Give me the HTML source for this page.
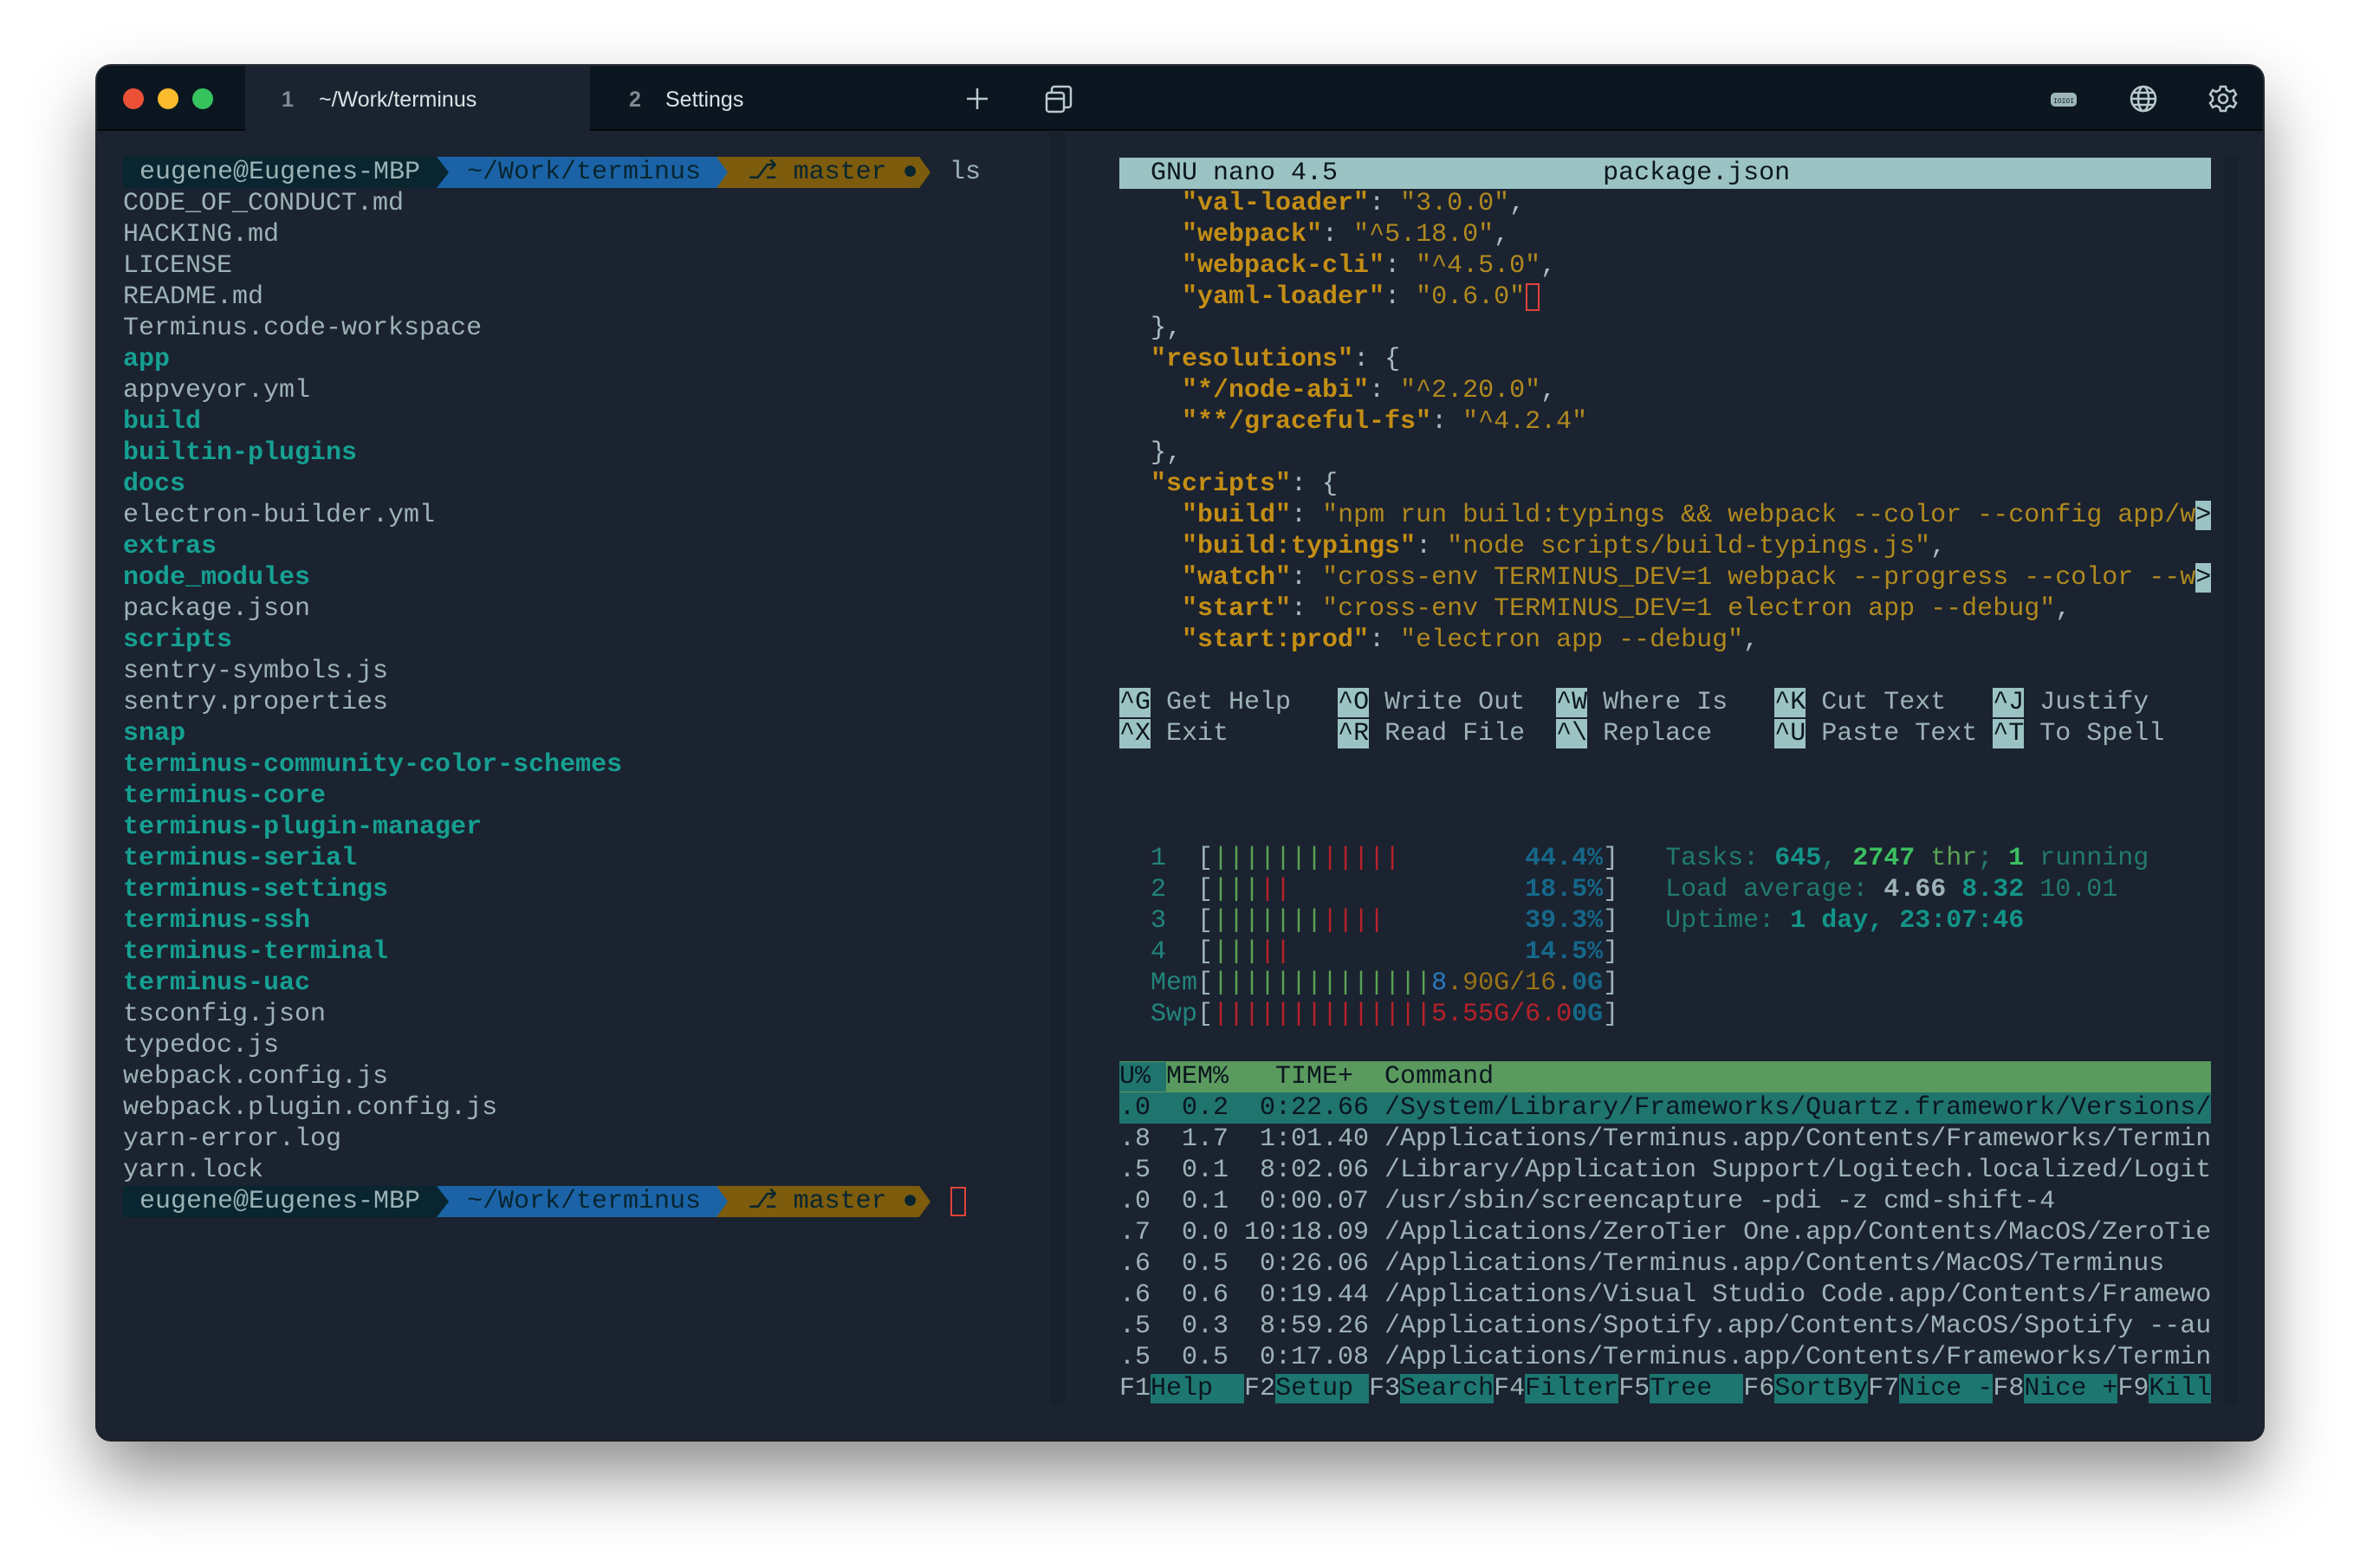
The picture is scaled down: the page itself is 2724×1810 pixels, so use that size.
<!DOCTYPE html>
<html><head><meta charset="utf-8"><style>
*{margin:0;padding:0;box-sizing:border-box}
html,body{width:2724px;height:1810px;overflow:hidden;background:#fff}
body{position:relative;font-family:"Liberation Mono",monospace;}
.win{position:absolute;left:112px;top:76px;width:2500px;height:1586px;background:#1b2330;border-radius:16px;overflow:hidden;box-shadow:0 40px 80px rgba(0,0,0,.45),0 0 0 2px #2a2f36}
.tb{position:absolute;left:0;top:0;width:2500px;height:75px;background:#0c1621;border-bottom:2px solid #06090d}
.tl{position:absolute;top:26px;width:24px;height:24px;border-radius:50%}
.tab1{position:absolute;left:171px;top:0;width:398px;height:76px;background:#1b2330}
.tabt{position:absolute;top:25px;font-family:"Liberation Sans",sans-serif;font-size:25px;color:#d8e4e6}
.r{position:absolute;height:36px;line-height:36px;font-size:30px;white-space:pre;color:#9db2b6}
.L{left:142px}.R{left:1292px;width:1260px;overflow:hidden}
.d{color:#16a092;font-weight:bold}
.k{color:#c48e15;font-weight:bold}.s{color:#b0891f}.p{color:#a9bcc0}
.inv{background:#9cc3c3;color:#0b1620}
.g{color:#5aa255}.rd{color:#b8222a}.pc{color:#16688a;font-weight:bold}.br{color:#9db2b6}.nm{color:#22857c}
.lab{color:#217a70}.bt{color:#139488;font-weight:bold}.bg{color:#3cc060;font-weight:bold}
.fk{color:#9db2b6}.fl{background:#1d7770;color:#0b1620}
.seg{position:absolute;top:0;height:36px}
</style></head><body>
<div class="win">
 <div class="tb">
  <div class="tl" style="left:30px;background:#ec5138"></div>
  <div class="tl" style="left:70px;background:#fbbb2c"></div>
  <div class="tl" style="left:110px;background:#36c25d"></div>
  <div class="tab1"></div>
  <div class="tabt" style="left:213px;color:#7d8d90;font-weight:bold">1</div>
  <div class="tabt" style="left:256px">~/Work/terminus</div>
  <div class="tabt" style="left:614px;color:#7d8d90;font-weight:bold">2</div>
  <div class="tabt" style="left:656px">Settings</div>
  <svg style="position:absolute;left:1002px;top:24px" width="28" height="28" viewBox="0 0 28 28"><path d="M14 2V26M2 14H26" stroke="#b9cacc" stroke-width="2.5"/></svg>
  <svg style="position:absolute;left:1093px;top:22px" width="34" height="34" viewBox="0 0 34 34" fill="none" stroke="#b9cacc" stroke-width="2.5"><rect x="3" y="9" width="20" height="22" rx="3"/><path d="M9 9V5a3 3 0 0 1 3-3h16a3 3 0 0 1 3 3v18a3 3 0 0 1-3 3h-5"/><path d="M3 16H23"/></svg>
  <svg style="position:absolute;left:2254px;top:28px" width="32" height="22" viewBox="0 0 32 22"><rect x="1" y="3" width="30" height="16" rx="5" fill="#9cb6b9"/><text x="16" y="15" font-size="8" text-anchor="middle" fill="#0c1621" font-family="Liberation Mono">IOIOI</text></svg>
  <svg style="position:absolute;left:2345px;top:21px" width="34" height="34" viewBox="0 0 34 34" fill="none" stroke="#b9cacc" stroke-width="2.5"><circle cx="17" cy="17" r="14"/><ellipse cx="17" cy="17" rx="6" ry="14"/><path d="M3 17H31M5 10H29M5 24H29"/></svg>
  <svg style="position:absolute;left:2437px;top:21px" width="34" height="34" viewBox="0 0 34 34" fill="none" stroke="#b9cacc" stroke-width="2.5"><circle cx="17" cy="17" r="5"/><path d="M14 3h6l1 4 4 2 4-2 3 5-3 3v4l3 3-3 5-4-2-4 2-1 4h-6l-1-4-4-2-4 2-3-5 3-3v-4l-3-3 3-5 4 2 4-2z"/></svg>
 </div>
 <div style="position:absolute;left:1100px;top:77px;width:18px;height:1470px;background:#18202b"></div>
 <div style="position:absolute;left:2456px;top:104px;width:15px;height:1443px;background:#18202b"></div>
</div>
<div style="position:absolute;left:0;top:0">
<div style="position:absolute;left:142px;top:181px;width:1000px;height:36px">
 <div class="seg" style="left:0;width:362px;background:#082530"></div>
 <div class="seg" style="left:362px;width:323px;background:#1b63a6"></div>
 <div class="seg" style="left:685px;width:234px;background:#7d5c0d"></div>
 <div class="seg" style="left:362px;width:14px;background:#082530;clip-path:polygon(0 0,100% 50%,0 100%)"></div>
 <div class="seg" style="left:685px;width:13px;background:#1b63a6;clip-path:polygon(0 0,100% 50%,0 100%)"></div>
 <div class="seg" style="left:919px;width:13px;background:#7d5c0d;clip-path:polygon(0 0,100% 50%,0 100%)"></div>
 <div class="r" style="left:19px;top:0">eugene@Eugenes-MBP</div>
 <div class="r" style="left:397px;top:0;color:#082530">~/Work/terminus</div>
 <div class="r" style="left:721px;top:0;color:#082530">⎇ master ●</div>
 <div class="r" style="left:954px;top:0">ls</div>
</div>
<div class="r L" style="top:217px">CODE_OF_CONDUCT.md</div>
<div class="r L" style="top:253px">HACKING.md</div>
<div class="r L" style="top:289px">LICENSE</div>
<div class="r L" style="top:325px">README.md</div>
<div class="r L" style="top:361px">Terminus.code-workspace</div>
<div class="r L d" style="top:397px">app</div>
<div class="r L" style="top:433px">appveyor.yml</div>
<div class="r L d" style="top:469px">build</div>
<div class="r L d" style="top:505px">builtin-plugins</div>
<div class="r L d" style="top:541px">docs</div>
<div class="r L" style="top:577px">electron-builder.yml</div>
<div class="r L d" style="top:613px">extras</div>
<div class="r L d" style="top:649px">node_modules</div>
<div class="r L" style="top:685px">package.json</div>
<div class="r L d" style="top:721px">scripts</div>
<div class="r L" style="top:757px">sentry-symbols.js</div>
<div class="r L" style="top:793px">sentry.properties</div>
<div class="r L d" style="top:829px">snap</div>
<div class="r L d" style="top:865px">terminus-community-color-schemes</div>
<div class="r L d" style="top:901px">terminus-core</div>
<div class="r L d" style="top:937px">terminus-plugin-manager</div>
<div class="r L d" style="top:973px">terminus-serial</div>
<div class="r L d" style="top:1009px">terminus-settings</div>
<div class="r L d" style="top:1045px">terminus-ssh</div>
<div class="r L d" style="top:1081px">terminus-terminal</div>
<div class="r L d" style="top:1117px">terminus-uac</div>
<div class="r L" style="top:1153px">tsconfig.json</div>
<div class="r L" style="top:1189px">typedoc.js</div>
<div class="r L" style="top:1225px">webpack.config.js</div>
<div class="r L" style="top:1261px">webpack.plugin.config.js</div>
<div class="r L" style="top:1297px">yarn-error.log</div>
<div class="r L" style="top:1333px">yarn.lock</div>
<div style="position:absolute;left:142px;top:1369px;width:1000px;height:36px">
 <div class="seg" style="left:0;width:362px;background:#082530"></div>
 <div class="seg" style="left:362px;width:323px;background:#1b63a6"></div>
 <div class="seg" style="left:685px;width:234px;background:#7d5c0d"></div>
 <div class="seg" style="left:362px;width:14px;background:#082530;clip-path:polygon(0 0,100% 50%,0 100%)"></div>
 <div class="seg" style="left:685px;width:13px;background:#1b63a6;clip-path:polygon(0 0,100% 50%,0 100%)"></div>
 <div class="seg" style="left:919px;width:13px;background:#7d5c0d;clip-path:polygon(0 0,100% 50%,0 100%)"></div>
 <div class="r" style="left:19px;top:0">eugene@Eugenes-MBP</div>
 <div class="r" style="left:397px;top:0;color:#082530">~/Work/terminus</div>
 <div class="r" style="left:721px;top:0;color:#082530">⎇ master ●</div>
 <div class="seg" style="left:955px;top:1px;width:18px;height:34px;border:2px solid #e0443a"></div>
</div>
<div class="r R inv" style="top:182px">  GNU nano 4.5                 package.json                         </div>
<div class="r R" style="top:217px">    <span class="k">"val-loader"</span><span class="p">: </span><span class="s">"3.0.0"</span><span class="p">,</span></div>
<div class="r R" style="top:253px">    <span class="k">"webpack"</span><span class="p">: </span><span class="s">"^5.18.0"</span><span class="p">,</span></div>
<div class="r R" style="top:289px">    <span class="k">"webpack-cli"</span><span class="p">: </span><span class="s">"^4.5.0"</span><span class="p">,</span></div>
<div class="r R" style="top:325px">    <span class="k">"yaml-loader"</span><span class="p">: </span><span class="s">"0.6.0"</span><span style="outline:2px solid #e0443a;outline-offset:-3px"> </span></div>
<div class="r R p" style="top:361px">  },</div>
<div class="r R" style="top:397px">  <span class="k">"resolutions"</span><span class="p">: {</span></div>
<div class="r R" style="top:433px">    <span class="k">"*/node-abi"</span><span class="p">: </span><span class="s">"^2.20.0"</span><span class="p">,</span></div>
<div class="r R" style="top:469px">    <span class="k">"**/graceful-fs"</span><span class="p">: </span><span class="s">"^4.2.4"</span></div>
<div class="r R p" style="top:505px">  },</div>
<div class="r R" style="top:541px">  <span class="k">"scripts"</span><span class="p">: {</span></div>
<div class="r R" style="top:577px">    <span class="k">"build"</span><span class="p">: </span><span class="s">"npm run build:typings &amp;&amp; webpack --color --config app/w</span><span class="inv">&gt;</span></div>
<div class="r R" style="top:613px">    <span class="k">"build:typings"</span><span class="p">: </span><span class="s">"node scripts/build-typings.js"</span><span class="p">,</span></div>
<div class="r R" style="top:649px">    <span class="k">"watch"</span><span class="p">: </span><span class="s">"cross-env TERMINUS_DEV=1 webpack --progress --color --w</span><span class="inv">&gt;</span></div>
<div class="r R" style="top:685px">    <span class="k">"start"</span><span class="p">: </span><span class="s">"cross-env TERMINUS_DEV=1 electron app --debug"</span><span class="p">,</span></div>
<div class="r R" style="top:721px">    <span class="k">"start:prod"</span><span class="p">: </span><span class="s">"electron app --debug"</span><span class="p">,</span></div>
<div class="r R" style="top:793px"><span class="inv">^G</span> Get Help   <span class="inv">^O</span> Write Out  <span class="inv">^W</span> Where Is   <span class="inv">^K</span> Cut Text   <span class="inv">^J</span> Justify</div>
<div class="r R" style="top:829px"><span class="inv">^X</span> Exit       <span class="inv">^R</span> Read File  <span class="inv">^\</span> Replace    <span class="inv">^U</span> Paste Text <span class="inv">^T</span> To Spell</div>
<div class="r R" style="top:973px"><span class="nm">  1  </span><span class="br">[</span><span class="g">|||||||</span><span class="rd">|||||</span>        <span class="pc">44.4%</span><span class="br">]</span>   <span class="lab">Tasks: </span><span class="bt">645</span><span class="lab">, </span><span class="bg">2747</span><span class="g"> thr</span><span class="lab">; </span><span class="bg">1</span><span class="lab"> running</span></div>
<div class="r R" style="top:1009px"><span class="nm">  2  </span><span class="br">[</span><span class="g">|||</span><span class="rd">||</span>               <span class="pc">18.5%</span><span class="br">]</span>   <span class="lab">Load average: </span><b class="br">4.66 </b><span class="bt">8.32 </span><span class="lab">10.01</span></div>
<div class="r R" style="top:1045px"><span class="nm">  3  </span><span class="br">[</span><span class="g">|||||||</span><span class="rd">||||</span>         <span class="pc">39.3%</span><span class="br">]</span>   <span class="lab">Uptime: </span><span class="bt">1 day, 23:07:46</span></div>
<div class="r R" style="top:1081px"><span class="nm">  4  </span><span class="br">[</span><span class="g">|||</span><span class="rd">||</span>               <span class="pc">14.5%</span><span class="br">]</span></div>
<div class="r R" style="top:1117px"><span class="nm">  Mem</span><span class="br">[</span><span class="g">||||||||||||||</span><span style="color:#2a7abf">8</span><span style="color:#9a7218">.90G/16.</span><span class="pc">0G</span><span class="br">]</span></div>
<div class="r R" style="top:1153px"><span class="nm">  Swp</span><span class="br">[</span><span class="rd">||||||||||||||5.55G/6.0</span><span class="pc">0G</span><span class="br">]</span></div>
<div class="r R" style="top:1225px;background:#5a9a5e;color:#0b1620"><span style="background:#20746e">U% </span>MEM%   TIME+  Command                                              </div>
<div class="r R" style="top:1261px;background:#20746e;color:#0b1620">.0  0.2  0:22.66 /System/Library/Frameworks/Quartz.framework/Versions/</div>
<div class="r R" style="top:1297px">.8  1.7  1:01.40 /Applications/Terminus.app/Contents/Frameworks/Termin</div>
<div class="r R" style="top:1333px">.5  0.1  8:02.06 /Library/Application Support/Logitech.localized/Logit</div>
<div class="r R" style="top:1369px">.0  0.1  0:00.07 /usr/sbin/screencapture -pdi -z cmd-shift-4</div>
<div class="r R" style="top:1405px">.7  0.0 10:18.09 /Applications/ZeroTier One.app/Contents/MacOS/ZeroTie</div>
<div class="r R" style="top:1441px">.6  0.5  0:26.06 /Applications/Terminus.app/Contents/MacOS/Terminus</div>
<div class="r R" style="top:1477px">.6  0.6  0:19.44 /Applications/Visual Studio Code.app/Contents/Framewo</div>
<div class="r R" style="top:1513px">.5  0.3  8:59.26 /Applications/Spotify.app/Contents/MacOS/Spotify --au</div>
<div class="r R" style="top:1549px">.5  0.5  0:17.08 /Applications/Terminus.app/Contents/Frameworks/Termin</div>
<div class="r R" style="top:1585px"><span class="fk">F1</span><span class="fl">Help  </span><span class="fk">F2</span><span class="fl">Setup </span><span class="fk">F3</span><span class="fl">Search</span><span class="fk">F4</span><span class="fl">Filter</span><span class="fk">F5</span><span class="fl">Tree  </span><span class="fk">F6</span><span class="fl">SortBy</span><span class="fk">F7</span><span class="fl">Nice -</span><span class="fk">F8</span><span class="fl">Nice +</span><span class="fk">F9</span><span class="fl">Kill  </span></div>
</div>
</body></html>
